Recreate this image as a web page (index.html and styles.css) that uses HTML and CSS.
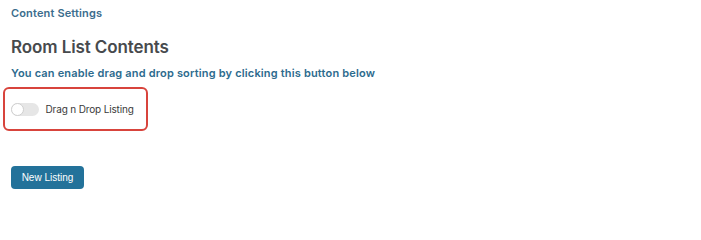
FILE: index.html
```html
<!DOCTYPE html>
<html>
<head>
<meta charset="utf-8">
<link rel="stylesheet" href="styles.css">
</head>
<body>
<div class="page">
  <div class="crumb">Content Settings</div>
  <h2 class="title">Room List Contents</h2>
  <p class="hint">You can enable drag and drop sorting by clicking this button below</p>
  <div class="highlight">
    <label class="toggle-row">
      <span class="switch"><span class="knob"></span></span>
      <span class="toggle-label">Drag n Drop Listing</span>
    </label>
  </div>
  <button class="btn">New Listing</button>
</div>
</body>
</html>
```
FILE: styles.css
```css
html, body {
  margin: 0;
  padding: 0;
  background: #ffffff;
}
.page {
  padding: 5px 11px 0 11px;
  font-family: Inter, "Open Sans", sans-serif;
}
.crumb {
  font-size: 11px;
  line-height: 16px;
  font-weight: 600;
  letter-spacing: 0.15px;
  color: #3b6d8d;
}
.title {
  margin: 15px 0 0 0;
  font-size: 17px;
  line-height: 22px;
  font-weight: 600;
  letter-spacing: -0.1px;
  color: #474a4d;
}
.hint {
  margin: 7px 0 0 0;
  font-size: 11px;
  line-height: 16px;
  font-weight: 600;
  letter-spacing: 0.17px;
  color: #2d6b8e;
}
.highlight {
  box-sizing: border-box;
  margin: 6px 0 0 -8px;
  width: 145px;
  height: 44px;
  border: 2.5px solid #d8443c;
  border-radius: 6px;
  display: flex;
  align-items: center;
  padding-left: 5.5px;
}
.toggle-row {
  display: flex;
  align-items: center;
  gap: 7px;
}
.switch {
  width: 28px;
  height: 13px;
  border-radius: 7px;
  background: #e6e6e6;
  position: relative;
  display: inline-block;
}
.knob {
  position: absolute;
  left: 0;
  top: 0;
  width: 11px;
  height: 11px;
  border-radius: 50%;
  background: #ffffff;
  border: 1px solid #cfcfcf;
}
.toggle-label {
  font-size: 10px;
  letter-spacing: -0.15px;
  color: #3a3a3a;
  font-weight: 400;
}
.btn {
  margin-top: 35px;
  width: 73px;
  height: 23px;
  border: none;
  border-radius: 4px;
  background: #23729a;
  color: #ffffff;
  font-family: "Liberation Sans", Arial, sans-serif;
  font-size: 10px;
  padding: 0;
}
```
